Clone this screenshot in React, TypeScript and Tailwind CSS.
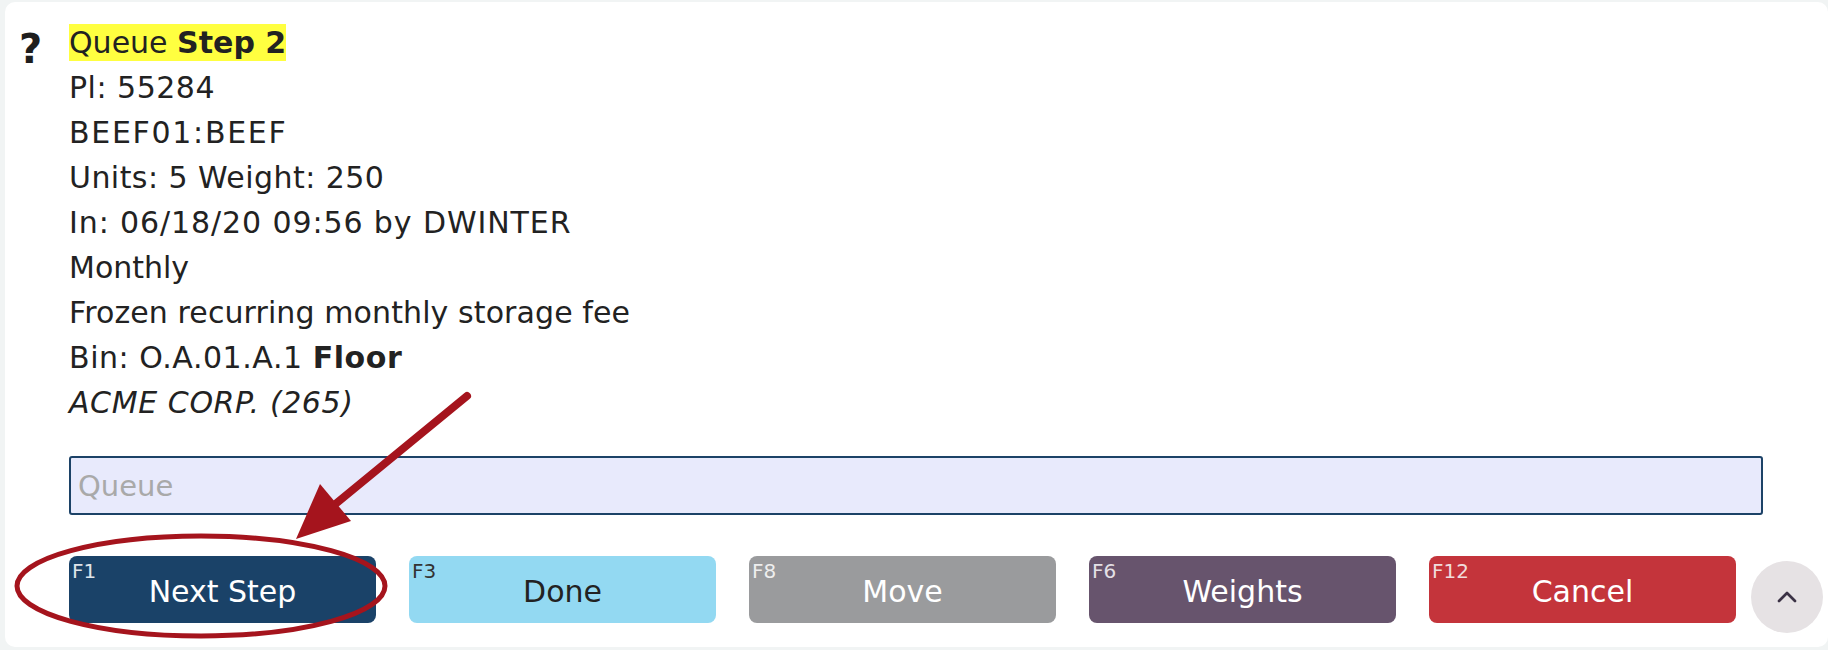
import { ChevronUp } from 'lucide-react';

// tracking per line: the original renders caps and digits a little wider than DejaVu does
const lines = [
  { text: 'Pl: 55284', track: 'tracking-[0.5px]' },
  { text: 'BEEF01:BEEF', track: 'tracking-[1.7px]' },
  { text: 'Units: 5 Weight: 250', track: 'tracking-[0.45px]' },
  { text: 'In: 06/18/20 09:56 by DWINTER', track: 'tracking-[0.9px]' },
  { text: 'Monthly', track: 'tracking-normal' },
  { text: 'Frozen recurring monthly storage fee', track: 'tracking-[0.1px]' },
];

const buttons = [
  { key: 'F1', label: 'Next Step', bg: 'bg-[#1a4268]', text: 'text-white', fk: 'text-[#dfe4ea]' },
  { key: 'F3', label: 'Done', bg: 'bg-[#93d9f2]', text: 'text-[#222]', fk: 'text-[#333]' },
  { key: 'F8', label: 'Move', bg: 'bg-[#9a9b9d]', text: 'text-white', fk: 'text-[#eee]' },
  { key: 'F6', label: 'Weights', bg: 'bg-[#67546d]', text: 'text-white', fk: 'text-[#e4e0e6]' },
  { key: 'F12', label: 'Cancel', bg: 'bg-[#c4343b]', text: 'text-white', fk: 'text-[#f0dcdc]' },
];

export default function App() {
  return (
    <div className="relative h-[650px] w-[1828px] overflow-hidden bg-[#f1f4f4] pt-[2px] pb-[3px] pl-[5px] font-['DejaVu_Sans',sans-serif] text-[#222]">
      <div className="relative flex h-[645px] rounded-[10px] bg-white">
        <div className="w-[64px] shrink-0 pl-[14px] pt-[27px]">
          <span className="block text-[40px] font-bold leading-[40px] text-[#1e1e1e]">?</span>
        </div>

        <div className="flex-1 pt-[18px] pr-[65px]">
          <div className="text-[30px] leading-[45px]">
            <div>
              <span className="bg-[#ffff40] py-[1px]">
                Queue <b>Step 2</b>
              </span>
            </div>
            {lines.map((l) => (
              <div key={l.text} className={l.track}>
                {l.text}
              </div>
            ))}
            <div className="tracking-[0.55px]">
              Bin: O.A.01.A.1 <b>Floor</b>
            </div>
            <div className="italic tracking-[0.6px]">ACME CORP. (265)</div>
          </div>

          <input
            placeholder="Queue"
            className="mt-[31px] block h-[59px] w-full rounded-[3px] border-2 border-[#1c4267] bg-[#e8eafc] px-[7px] text-[29px] outline-none placeholder:text-[#a9a9a9]"
          />

          <div className="mt-[41px] flex gap-[33px]">
            {buttons.map((b) => (
              <button
                key={b.key}
                className={`relative flex h-[67px] w-[307px] items-center justify-center rounded-[8px] text-[30px] ${b.bg} ${b.text}`}
              >
                <span className={`absolute top-[4px] left-[3px] text-[20px] leading-[23px] ${b.fk}`}>{b.key}</span>
                <span className="mt-[4px]">{b.label}</span>
              </button>
            ))}
          </div>
        </div>

        <button className="absolute top-[559px] right-[5px] flex h-[72px] w-[72px] items-center justify-center rounded-full bg-[#e6e2e4] text-[#3b3245]">
          <ChevronUp size={32} strokeWidth={2} />
        </button>
      </div>

      {/* red annotation drawn over the screenshot */}
      <svg className="pointer-events-none absolute inset-0" width="1828" height="650" viewBox="0 0 1828 650">
        <ellipse cx="201" cy="586" rx="184" ry="50" fill="none" stroke="#a5141d" strokeWidth="5" />
        <line x1="467" y1="396" x2="333" y2="506" stroke="#a5141d" strokeWidth="8" strokeLinecap="round" />
        <polygon points="296,539 320,484 351,521" fill="#a5141d" />
      </svg>
    </div>
  );
}
